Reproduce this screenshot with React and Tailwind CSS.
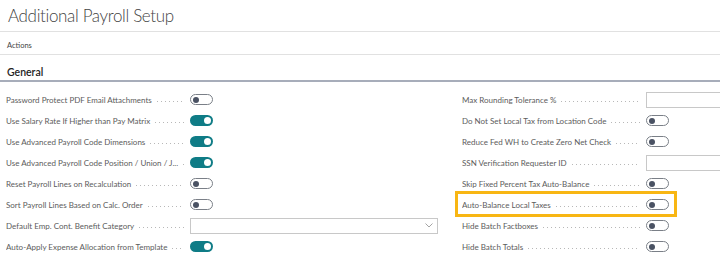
import React from "react";

function Toggle({ on }) {
  if (on) {
    return (
      <div className="w-[23px] h-[11px] rounded-full bg-[#0f7c86] flex items-center justify-end pr-[2px]">
        <div className="w-[7px] h-[7px] rounded-full bg-white" />
      </div>
    );
  }
  return (
    <div className="w-[23px] h-[11px] rounded-full border-[1.5px] border-[#7a7f87] bg-white flex items-center pl-[2px]">
      <div className="w-[6px] h-[6px] rounded-full bg-[#4a5263]" />
    </div>
  );
}

function Row({ label, control, highlight }) {
  return (
    <div className="relative h-[21px] flex items-center">
      {highlight && (
        <div className="absolute left-[-7px] top-[-3px] w-[222px] h-[26px] border-[3px] border-[#f8b613]" />
      )}
      <div className="w-[184px] shrink-0 flex items-center pr-[6px] overflow-hidden">
        <span className="whitespace-nowrap text-[#5c5c5c] pr-[5px]">{label}</span>
        <span className="flex-1 h-[1px] mt-[4px] bg-[linear-gradient(to_right,#b8b8b8_1px,transparent_1px)] bg-[length:4px_1px] bg-repeat-x" />
      </div>
      <div className="flex-1 flex items-center">{control}</div>
    </div>
  );
}

function Select() {
  return (
    <div className="w-[248px] h-[16px] border border-[#c8c8c8] bg-white flex items-center justify-end pr-[4px]">
      <svg width="8" height="5" viewBox="0 0 8 5" fill="none">
        <path d="M0.5 0.5 L4 4 L7.5 0.5" stroke="#9a9a9a" strokeWidth="0.9" />
      </svg>
    </div>
  );
}

function Input() {
  return <div className="w-[100px] h-[16px] border border-[#c8c8c8] bg-white" />;
}

export default function App() {
  const left = [
    ["Password Protect PDF Email Attachments", <Toggle />],
    ["Use Salary Rate If Higher than Pay Matrix", <Toggle on />],
    ["Use Advanced Payroll Code Dimensions", <Toggle on />],
    ["Use Advanced Payroll Code Position / Union / J...", <Toggle on />],
    ["Reset Payroll Lines on Recalculation", <Toggle />],
    ["Sort Payroll Lines Based on Calc. Order", <Toggle />],
    ["Default Emp. Cont. Benefit Category", <Select />],
    ["Auto-Apply Expense Allocation from Template", <Toggle on />],
  ];
  const right = [
    ["Max Rounding Tolerance %", <Input />],
    ["Do Not Set Local Tax from Location Code", <Toggle />],
    ["Reduce Fed WH to Create Zero Net Check", <Toggle />],
    ["SSN Verification Requester ID", <Input />],
    ["Skip Fixed Percent Tax Auto-Balance", <Toggle />],
    ["Auto-Balance Local Taxes", <Toggle />, true],
    ["Hide Batch Factboxes", <Toggle />],
    ["Hide Batch Totals", <Toggle />],
  ];
  return (
    <div className="w-[720px] h-[277px] bg-white overflow-hidden font-['Lato','Open_Sans',sans-serif]">
      <div className="h-[32px] pl-[8px] flex items-center border-b border-[#e1e1e1]">
        <span className="text-[17px] tracking-[-0.35px] font-light text-[#444] leading-none">Additional Payroll Setup</span>
      </div>
      <div className="h-[23px] pl-[7px] pt-[5px] flex items-center border-b border-[#e1e1e1]">
        <span className="text-[7.5px] text-[#444]">Actions</span>
      </div>
      <div className="h-[27px] pl-[7px] pb-[3px] flex items-end border-b-[2px] border-[#a7adba]">
        <span className="text-[10.5px] font-semibold text-[#222] leading-none">General</span>
      </div>
      <div className="pt-[7px] pl-[6px] grid grid-cols-[432px_432px] gap-x-[24px] text-[8px]">
        <div className="flex flex-col">
          {left.map(([l, c], i) => (
            <Row key={i} label={l} control={c} />
          ))}
        </div>
        <div className="flex flex-col">
          {right.map(([l, c, h], i) => (
            <Row key={i} label={l} control={c} highlight={h} />
          ))}
        </div>
      </div>
    </div>
  );
}
